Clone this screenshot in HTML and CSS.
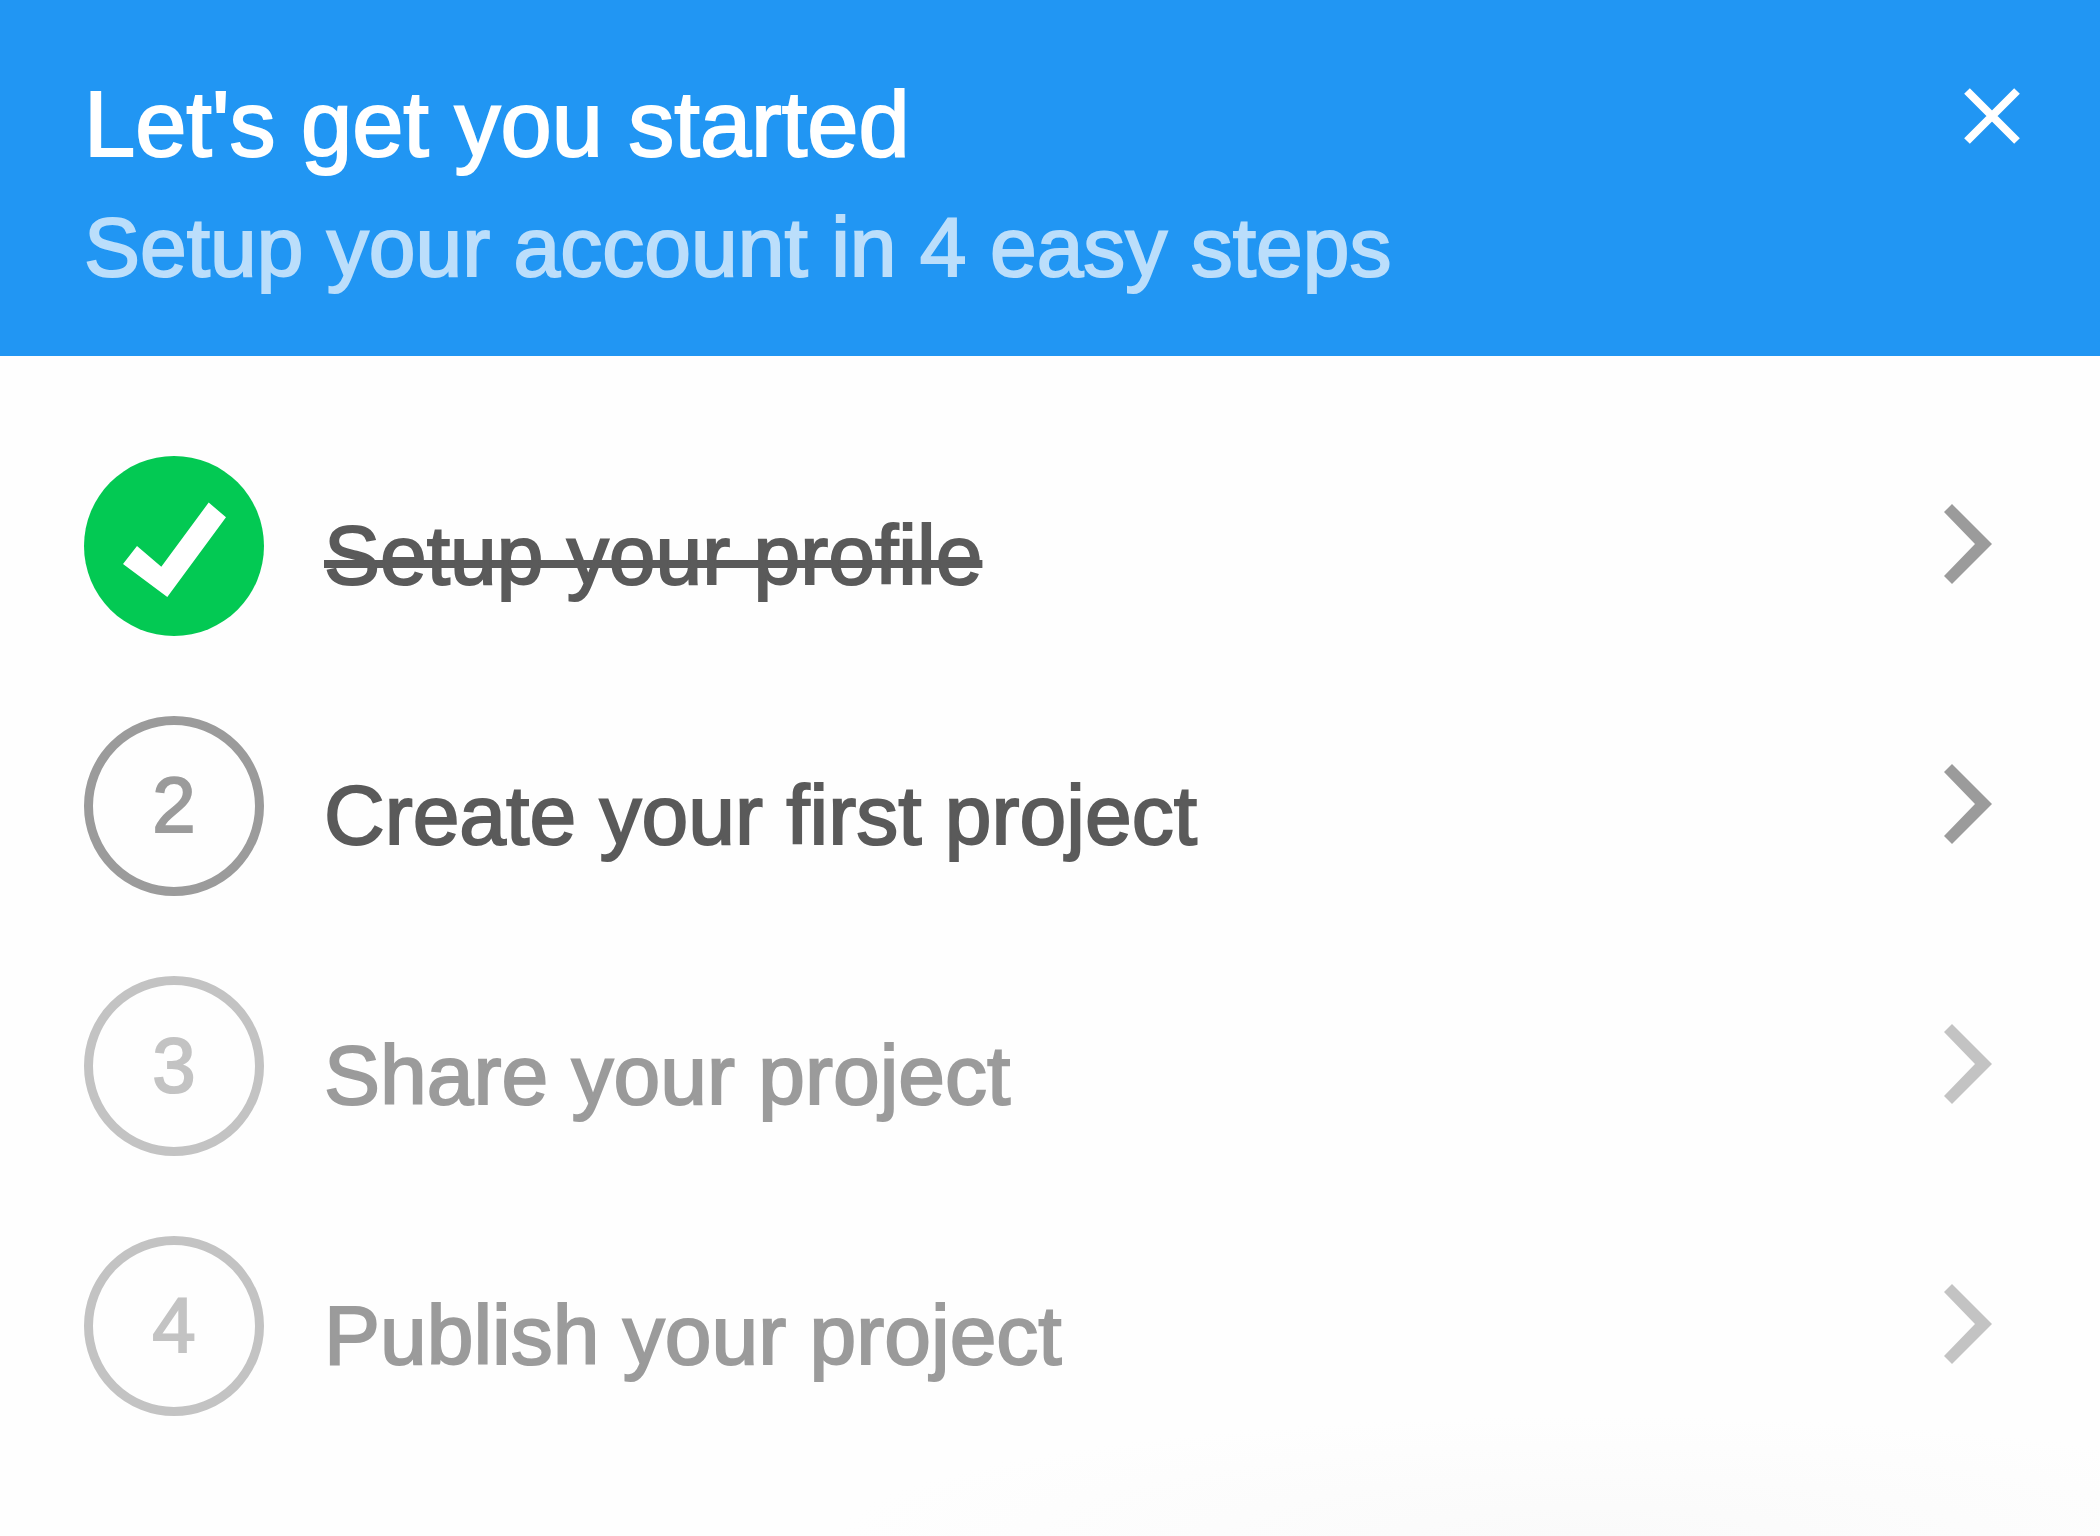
FILE: index.html
```html
<!DOCTYPE html>
<html lang="en">
<head>
<meta charset="utf-8">
<meta name="viewport" content="width=device-width, initial-scale=1">
<title>Let's get you started</title>
<link rel="stylesheet" href="styles.css">
</head>
<body>
<main class="checklist">
  <header class="header">
    <div class="heading">
      <h1 class="title">Let's get you started</h1>
      <p class="subtitle">Setup your account in 4 easy steps</p>
    </div>
    <button class="close" type="button" aria-label="Close">
      <svg class="close-icon" viewBox="0 0 56 56" aria-hidden="true"><path d="M3 3 53 53M53 3 3 53"/></svg>
    </button>
  </header>
  <ol class="steps">
    <li>
      <a class="step done" href="#profile">
        <svg class="badge-done" viewBox="0 0 180 180" role="img" aria-label="Completed"><circle cx="90" cy="90" r="90"/><path d="M39 108 53 90 77.300 110.700 124.700 46.500 142 61.300 83.300 141Z"/></svg>
        <span class="label">Setup your profile</span>
        <svg class="chevron" viewBox="0 0 48 80" aria-hidden="true"><path d="M8 0 48 40 8 80 0 72 31 40 0 8Z"/></svg>
      </a>
    </li>
    <li>
      <a class="step" href="#create">
        <span class="badge">2</span>
        <span class="label">Create your first project</span>
        <svg class="chevron" viewBox="0 0 48 80" aria-hidden="true"><path d="M8 0 48 40 8 80 0 72 31 40 0 8Z"/></svg>
      </a>
    </li>
    <li>
      <a class="step pending" href="#share">
        <span class="badge">3</span>
        <span class="label">Share your project</span>
        <svg class="chevron" viewBox="0 0 48 80" aria-hidden="true"><path d="M8 0 48 40 8 80 0 72 31 40 0 8Z"/></svg>
      </a>
    </li>
    <li>
      <a class="step pending" href="#publish">
        <span class="badge">4</span>
        <span class="label">Publish your project</span>
        <svg class="chevron" viewBox="0 0 48 80" aria-hidden="true"><path d="M8 0 48 40 8 80 0 72 31 40 0 8Z"/></svg>
      </a>
    </li>
  </ol>
</main>
</body>
</html>
```
FILE: styles.css
```css
* {
  box-sizing: border-box;
}

body {
  margin: 0;
  font-family: "Liberation Sans", Arial, Helvetica, sans-serif;
  background: #fefefe;
}

.checklist {
  min-height: 100vh;
  background: radial-gradient(ellipse 36% 120px at 76% 100%, #fafafa, #fefefe);
}

.header {
  display: flex;
  justify-content: space-between;
  align-items: flex-start;
  padding: 64px 80px 46px 84px;
  background: #2196f3;
}

.title,
.subtitle {
  margin: 0;
  font-weight: 400;
  -webkit-text-stroke: 2px currentColor;
}

.title {
  font-size: 92px;
  line-height: 120px;
  color: #fff;
}

.subtitle {
  font-size: 84px;
  line-height: 126px;
  color: #bbdefb;
}

.close {
  display: flex;
  margin: 24px 0 0;
  padding: 0;
  border: 0;
  background: none;
  cursor: pointer;
}

.close-icon {
  width: 56px;
  height: 56px;
  fill: none;
  stroke: #fff;
  stroke-width: 8;
}

.steps {
  display: flex;
  flex-direction: column;
  gap: 80px;
  margin: 0;
  padding: 100px 108px 120px 84px;
  list-style: none;
}

.step {
  display: flex;
  align-items: center;
  gap: 60px;
  color: #5a5a5a;
  text-decoration: none;
}

.badge,
.badge-done {
  flex: none;
  width: 180px;
  height: 180px;
}

.badge {
  display: flex;
  align-items: center;
  justify-content: center;
  padding-bottom: 2px;
  border: 9px solid #9b9b9b;
  border-radius: 50%;
  font-size: 78px;
  color: #9b9b9b;
  -webkit-text-stroke: 2px currentColor;
}

.badge-done circle {
  fill: #03c953;
}

.badge-done path {
  fill: #fff;
}

.label {
  padding-top: 18px;
  font-size: 84px;
  line-height: 120px;
  -webkit-text-stroke: 2px currentColor;
}

/* A raised underline, so that the strike crosses the lowercase letters low. */
.done .label {
  text-decoration: underline 8px;
  text-underline-offset: -24px;
  text-decoration-skip-ink: none;
}

.chevron {
  flex: none;
  width: 48px;
  height: 80px;
  margin: 0 0 4px auto;
  fill: #9b9b9b;
}

.pending {
  color: #9b9b9b;
}

.pending .badge {
  border-color: #c3c3c3;
  color: #c3c3c3;
}

.pending .chevron {
  fill: #c3c3c3;
}
```
